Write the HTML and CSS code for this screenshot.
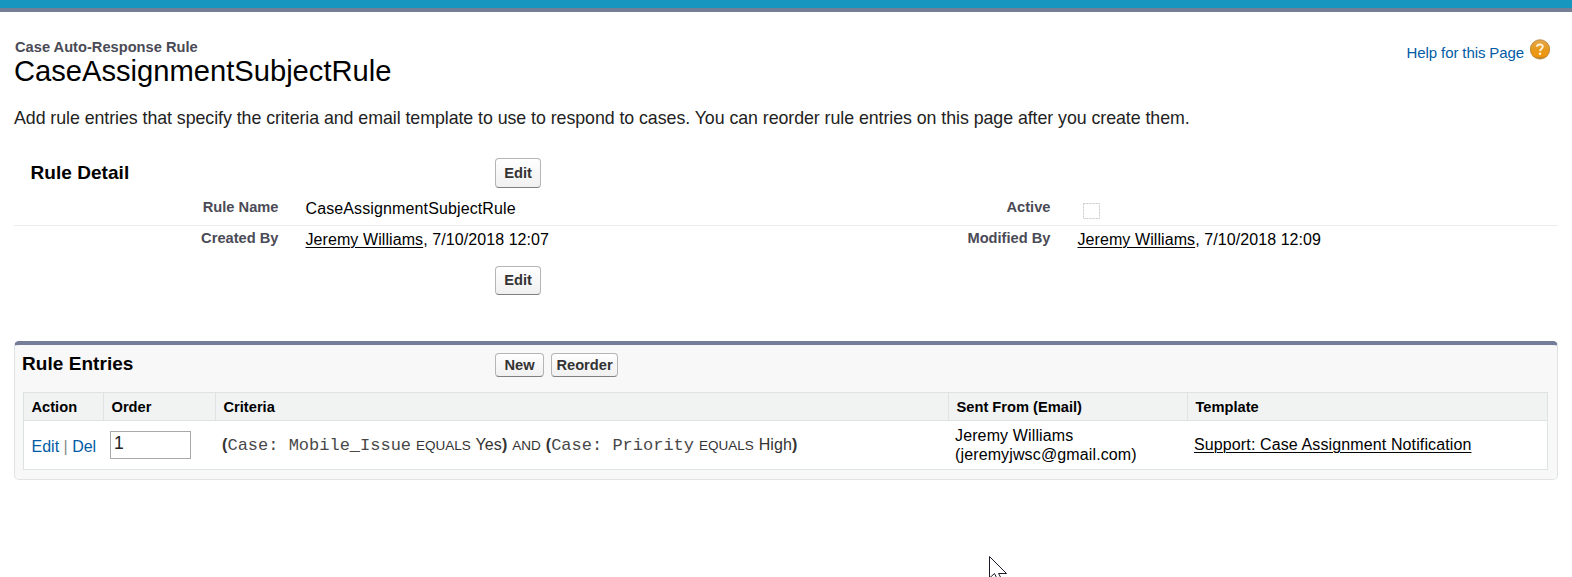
FILE: index.html
```html
<!DOCTYPE html>
<html lang="en">
<head>
<meta charset="utf-8">
<title>Case Auto-Response Rule</title>
<link rel="stylesheet" href="styles.css">
</head>
<body>
<div class="topbar"></div>
<main class="page">
  <header class="head">
    <div>
      <h2 class="kicker"><span>Case Auto-Response Rule</span></h2>
      <h1 class="title"><span>CaseAssignmentSubjectRule</span></h1>
    </div>
    <a class="help"><span>Help for this Page</span>
      <svg class="help-icon" width="20" height="21" viewBox="0 0 20 21">
        <defs><linearGradient id="g" x1="0" y1="0" x2="0" y2="1"><stop offset="0" stop-color="#e5a94b"/><stop offset=".45" stop-color="#e59a20"/><stop offset=".85" stop-color="#f0960c"/><stop offset="1" stop-color="#a87528"/></linearGradient></defs>
        <circle cx="10" cy="10.4" r="9.7" fill="url(#g)" stroke="#a9762c" stroke-width=".7"/>
        <path d="M7 7.8C7.2 4.9 12.8 4.7 12.8 7.8C12.8 9.7 10.2 9.8 10.1 12.1" fill="none" stroke="#fff3d8" stroke-width="1.9"/>
        <circle cx="10" cy="14.8" r="1.2" fill="#fff3d8"/>
      </svg>
    </a>
  </header>
  <p class="intro"><span>Add rule entries that specify the criteria and email template to use to respond to cases. You can reorder rule entries on this page after you create them.</span></p>
  <section class="detail">
    <div class="detail-head"><h3 class="heading"><span>Rule Detail</span></h3><button class="btn">Edit</button></div>
    <div class="row ruled">
      <div class="label">Rule Name</div><div class="value">CaseAssignmentSubjectRule</div>
      <div class="label">Active</div><div class="value"><svg class="check" width="17" height="16"><rect x=".5" y=".5" width="16" height="15" fill="none" stroke="#c9c9c9" stroke-dasharray="2 1"/></svg></div>
    </div>
    <div class="row">
      <div class="label">Created By</div><div class="value"><a class="user">Jeremy Williams</a>, 7/10/2018 12:07</div>
      <div class="label">Modified By</div><div class="value"><a class="user">Jeremy Williams</a>, 7/10/2018 12:09</div>
    </div>
    <div class="detail-foot"><button class="btn">Edit</button></div>
  </section>
  <section class="panel">
    <div class="panel-head"><h3 class="heading"><span>Rule Entries</span></h3><button class="btn small new">New</button><button class="btn small reorder">Reorder</button></div>
    <div class="table">
      <div class="tr th"><div>Action</div><div>Order</div><div>Criteria</div><div>Sent From (Email)</div><div>Template</div></div>
      <div class="tr td">
        <div class="action"><a>Edit</a> <i>|</i> <a>Del</a></div>
        <div class="order"><input class="num" value="1"></div>
        <div class="criteria"><b>(</b><code>Case: Mobile_Issue</code> <small>EQUALS</small> Yes<b>)</b> <small>AND</small> <b>(</b><code>Case: Priority</code> <small>EQUALS</small> High<b>)</b></div>
        <div class="from">Jeremy Williams<br>(jeremyjwsc@gmail.com)</div>
        <div class="tpl"><a class="user">Support: Case Assignment Notification</a></div>
      </div>
    </div>
  </section>
</main>
<svg class="cursor" width="20" height="24" viewBox="0 0 20 24"><path d="M.5 .5V22L5.5 17.5L8.5 23.5L12 22L9.5 17.5H17.5Z" fill="#fff" stroke="#1a1a28"/></svg>
</body>
</html>
```
FILE: styles.css
```css
* { box-sizing: border-box; }
html { height: 577px; overflow: hidden; }
body { position: relative; height: 577px; margin: 0; overflow: hidden; background: #fff; color: #000; font: 16px/20px "Liberation Sans", Arial, sans-serif; white-space: nowrap; }
h1, h2, h3, p { margin: 0; }
.topbar { height: 12px; background: #1797c0; border-bottom: 4px solid #747e96; }
.page { padding: 0 14px; }
.head { display: flex; justify-content: space-between; height: 90px; padding-top: 25px; }
.kicker { padding-left: 1px; font-size: 14.67px; line-height: 20px; color: #4a4a56; }
.title { font-size: 29.15px; line-height: 28px; font-weight: 400; }
.help { display: flex; align-items: flex-start; gap: 6px; padding: 6px 8px 0 0; font-size: 15px; letter-spacing: -.1px; color: #015ba7; }
.help-icon { margin-top: -4px; }
.intro { height: 56px; padding-top: 5px; font-size: 17.8px; line-height: 22px; letter-spacing: -.055px; color: #222; }
.heading { font-size: 19px; line-height: 24px; letter-spacing: .05px; }
.detail-head { display: grid; grid-template-columns: 481px auto; justify-content: start; height: 36px; }
.detail-head .heading { padding: 3px 0 0 16.5px; }
.btn { height: 30px; width: 46px; padding: 0 0 1px; border: 1px solid #b5b5b5; border-bottom-color: #7f7f7f; border-radius: 4px; background: linear-gradient(#fff, #f0f0f0); color: #333; font: bold 14.67px/18px "Liberation Sans", Arial, sans-serif; }
.row { display: grid; grid-template-columns: 264.5px 507.5px 264.5px 506.5px; height: 31px; }
.ruled { height: 32px; border-bottom: 1px solid #ececec; }
.label { padding-top: 3px; text-align: right; font-size: 14.67px; font-weight: bold; color: #4a4a56; }
.value { padding: 5px 0 0 27px; letter-spacing: .12px; }
.row:not(.ruled) .label { padding-top: 2px; }
.row:not(.ruled) .value { padding-top: 4px; letter-spacing: .08px; }
.user { color: #000; text-decoration: underline; text-underline-offset: 2px; text-decoration-thickness: 1px; }
.check { display: block; margin: 4px 0 0 5px; }
.detail-foot { height: 84px; padding: 9px 0 0 481px; }
.detail-foot .btn { height: 29px; padding-bottom: 2px; }
.panel { width: 1544px; height: 139px; padding: 0 8px; border: 1px solid #e0e3e5; border-top: 4px solid #747e9a; border-radius: 5px; background: #f8f8f8; }
.panel-head { display: flex; height: 47px; padding-top: 8px; }
.panel-head .heading { width: 473px; margin: -1px 0 0 -1px; }
.small { height: 24px; }
.new { width: 49px; margin-right: 7px; }
.reorder { width: 67px; }
.table { width: 1525px; border: 1px solid #dde2e2; }
.tr { display: grid; grid-template-columns: 80px 112px 733px 239px 1fr; }
.th { height: 28px; background: #f1f3f3; border-bottom: 1px solid #dde2e2; font-size: 14.67px; font-weight: bold; }
.th div { padding: 4px 0 0 7.5px; border-right: 1px solid #e0e3e5; }
.th div:last-child { border: 0; }
.td { height: 48px; background: #fff; }
.action { padding: 16px 0 0 7.5px; color: #015ba7; }
.action i { font-style: normal; color: #888; }
.order { padding: 10px 0 0 6px; }
.num { display: block; width: 81px; height: 28px; padding: 0 3px 3px; border: 1px solid #a9a9a9; font: 17.5px "Liberation Sans", Arial, sans-serif; color: #222; }
.criteria { padding: 14px 0 0 6px; color: #333; letter-spacing: .1px; word-spacing: .4px; }
code { font: 17px/20px "Liberation Mono", monospace; letter-spacing: 0; word-spacing: 0; color: #484848; }
small { font-size: 13.5px; letter-spacing: 0; }
.from { padding: 5px 0 0 6px; line-height: 19px; letter-spacing: .13px; }
.tpl { padding: 14px 0 0 6px; letter-spacing: .12px; }
.cursor { position: absolute; left: 989px; top: 556px; }
```
